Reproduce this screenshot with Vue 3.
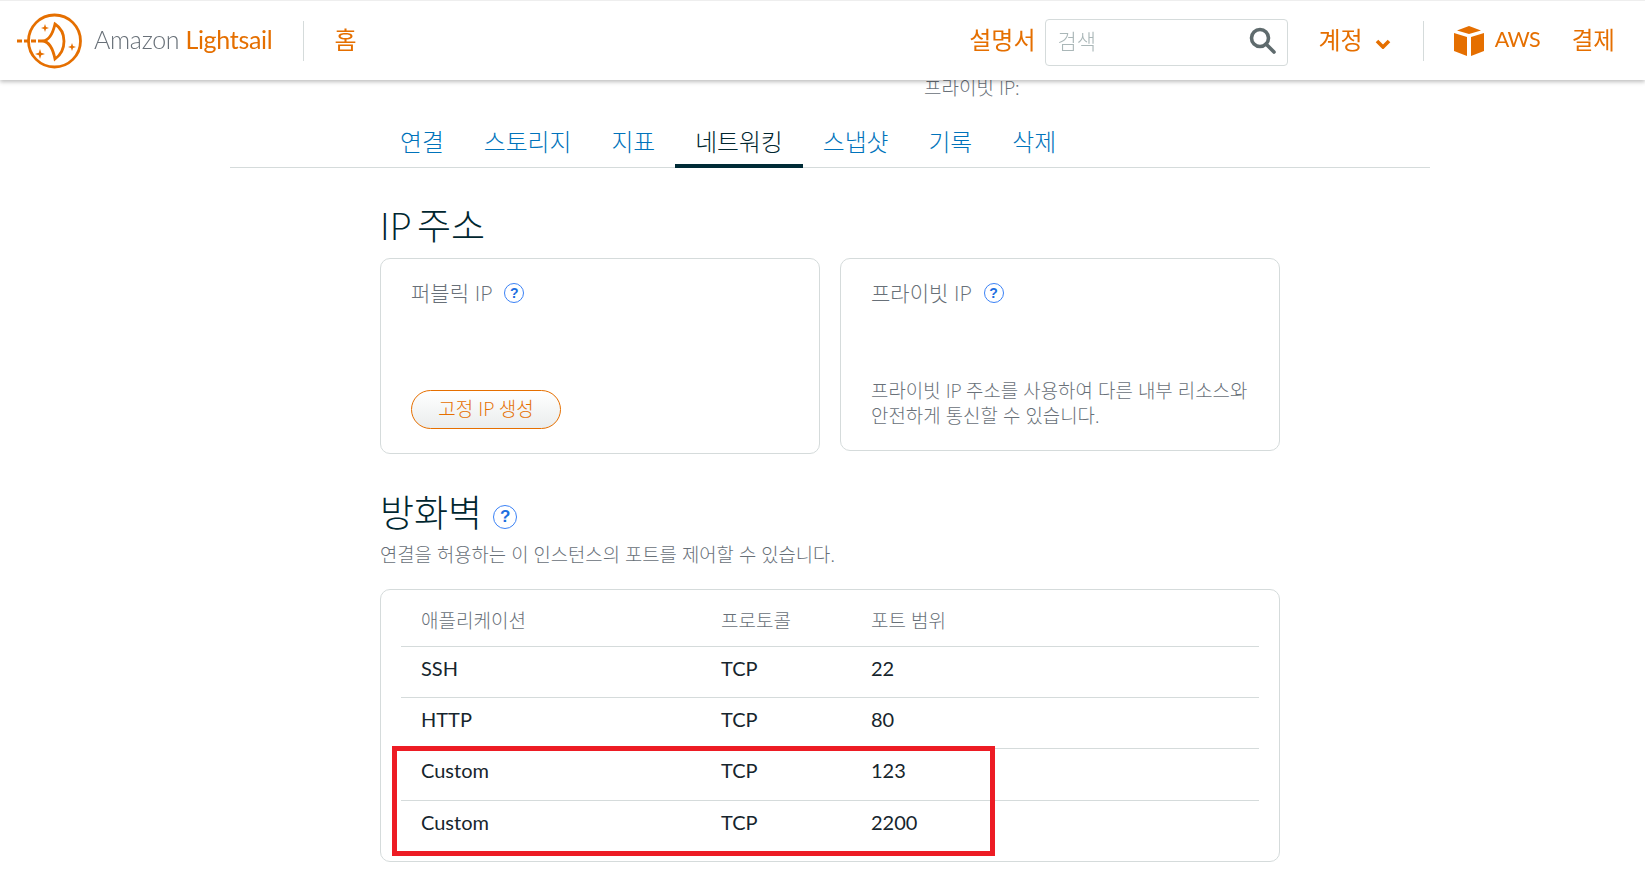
<script setup>
const tabs = ['연결', '스토리지', '지표', '네트워킹', '스냅샷', '기록', '삭제']
const rows = [
  { app: 'SSH', proto: 'TCP', port: '22' },
  { app: 'HTTP', proto: 'TCP', port: '80' },
  { app: 'Custom', proto: 'TCP', port: '123' },
  { app: 'Custom', proto: 'TCP', port: '2200' }
]
</script>

<template>
  <div class="page">
    <header class="topbar">
      <div class="brand">
        <svg class="logo" viewBox="0 0 66 60" width="66" height="60" fill="none" stroke="#e56f00" stroke-width="2.8">
          <circle cx="38.5" cy="30" r="26" />
          <path d="M1 30H27" stroke-dasharray="5 2" />
          <path d="M27 30C34 29 37 22 39 13C51 21 51 39 39 48C37 38 34 31 27 30Z" />
          <path d="M29 13l1 3 3 1-3 1-1 3-1-3-3-1 3-1zM24 38l1.2 3.8 3.8 1.2-3.8 1.2-1.2 3.8-1.2-3.8-3.8-1.2 3.8-1.2zM56 32l1 3 3 1-3 1-1 3-1-3-3-1 3-1z" fill="#e56f00" stroke="none" />
        </svg>
        <span class="wordmark"><span class="am">Amazon</span> <span class="ls">Lightsail</span></span>
      </div>
      <div class="vr first"></div>
      <a class="nav home">홈</a>
      <div class="spacer"></div>
      <a class="nav docs">설명서</a>
      <div class="search">
        <span class="ph">검색</span>
        <svg viewBox="0 0 28 28" width="28" height="28" fill="none" stroke="#5f6b6d" stroke-width="3.6">
          <circle cx="12" cy="12" r="8.5" />
          <path d="M18 18l8 8" stroke-linecap="round" />
        </svg>
      </div>
      <a class="nav account">계정
        <svg viewBox="0 0 16 10" width="16" height="10" fill="none" stroke="#e56f00" stroke-width="3.6"><path d="M2 2l6 6 6-6" /></svg>
      </a>
      <div class="vr second"></div>
      <svg class="cube" viewBox="0 0 32 32" width="32" height="32" fill="#e56f00">
        <path d="M16 1l12 4.5L16 9 4 5.5z" />
        <path d="M1 8l13 4v19L1 26z" />
        <path d="M31 8l-13 4v19l13-5z" />
      </svg>
      <a class="nav aws">AWS</a>
      <a class="nav bill">결제</a>
    </header>

    <main class="main">
      <p class="peek">프라이빗 IP:</p>
      <nav class="tabs">
        <a v-for="t in tabs" :key="t" class="tab" :class="{ active: t === '네트워킹' }">{{ t }}</a>
      </nav>

      <section class="content">
        <h2 class="title">IP 주소</h2>
        <div class="cards">
          <div class="card public">
            <div class="label">퍼블릭 IP <span class="help">?</span></div>
            <button class="btn">고정 IP 생성</button>
          </div>
          <div class="card private">
            <div class="label">프라이빗 IP <span class="help">?</span></div>
            <p class="desc">프라이빗 IP 주소를 사용하여 다른 내부 리소스와<br />안전하게 통신할 수 있습니다.</p>
          </div>
        </div>

        <h2 class="title fw">방화벽 <span class="help big">?</span></h2>
        <p class="sub">연결을 허용하는 이 인스턴스의 포트를 제어할 수 있습니다.</p>

        <div class="tablecard">
          <div class="row head">
            <span>애플리케이션</span><span>프로토콜</span><span>포트 범위</span>
          </div>
          <div v-for="(r, i) in rows" :key="i" class="row" :class="{ last: i === rows.length - 1 }">
            <span>{{ r.app }}</span><span>{{ r.proto }}</span><span>{{ r.port }}</span>
          </div>
          <div class="mark"></div>
        </div>
      </section>
    </main>
  </div>
</template>

<style>
html, body { margin: 0; background: #fff; overflow: hidden; }
</style>

<style scoped>
.page {
  height: 870px;
  overflow: hidden;
  font-family: "Lato", "Noto Sans CJK KR", sans-serif;
  font-weight: 400;
  color: #687078;
}
.topbar {
  position: fixed;
  top: 0; left: 0; right: 0;
  height: 80px;
  box-sizing: border-box;
  border-top: 1px solid #eee;
  background: #fff;
  box-shadow: 0 2px 4px rgba(0,0,0,.25);
  display: flex;
  align-items: center;
  z-index: 5;
}
.brand { display: flex; align-items: center; margin-left: 16px; }
.wordmark { font-size: 25px; margin-left: 12px; padding-bottom: 4px; white-space: nowrap; letter-spacing: -.3px; }
.am { color: #687078; font-weight: 300; }
.ls { color: #e56f00; font-weight: 400; }
.vr { width: 1px; height: 40px; background: #d5dbdb; }
.vr.first { margin-left: 31px; }
.nav { color: #e56f00; font-size: 24px; white-space: nowrap; padding-bottom: 4px; }
.home { margin-left: 30px; }
.spacer { flex: 1; }
.search {
  width: 243px; height: 47px; box-sizing: border-box;
  margin: 4px 0 0 9px;
  border: 1px solid #d5dbdb; border-radius: 4px;
  display: flex; align-items: center; justify-content: space-between;
  padding: 0 11px 6px 12px;
}
.ph { font-size: 21px; color: #aab7b8; font-weight: 300; }
.account { margin-left: 31px; display: flex; align-items: center; gap: 12px; }
.account svg { margin-top: 11px; }
.vr.second { margin-left: 32px; }
.cube { margin-left: 29px; }
.aws { margin-left: 10px; font-size: 21.5px; font-weight: 400; letter-spacing: -.8px; }
.bill { margin-left: 32px; margin-right: 30px; font-size: 23.5px; }

.main { width: 1200px; margin-left: 230px; padding-top: 77px; }
.peek { margin: 1px 0 -1px 694px; font-size: 19px; line-height: 20px; height: 20px; font-weight: 300; }
.tabs {
  height: 71px; box-sizing: border-box;
  border-bottom: 1px solid #d5dbdb;
  display: flex; padding-left: 150px;
}
.tab {
  color: #0073bb;
  font-size: 23.8px;
  font-weight: 300;
  padding: 16px 20px 0;
  height: 71px; box-sizing: border-box;
  display: flex; align-items: center;
}
.tab.active { color: #00262f; box-shadow: inset 0 -4px 0 #002b36; }

.content { padding: 0 150px; }
.title {
  margin: 33px 0 0;
  font-size: 37px; line-height: 50px; font-weight: 300; color: #00262f;
  word-spacing: -3px;
}
.cards { display: flex; gap: 20px; align-items: flex-start; margin-top: 7px; }
.card {
  width: 440px; box-sizing: border-box;
  border: 1px solid #d5dbdb; border-radius: 10px;
  padding: 20px 30px;
}
.card.public { height: 196px; }
.card.private { height: 193px; display: flex; flex-direction: column; justify-content: space-between; padding-bottom: 22px; }
.label { font-size: 21px; line-height: 28px; display: flex; align-items: center; gap: 12px; font-weight: 300; }
.help {
  display: inline-flex; align-items: center; justify-content: center;
  width: 18px; height: 18px; border-radius: 50%;
  border: 1.5px solid #3b82f6; color: #1d6fe0;
  font-size: 14px; font-weight: 700;
  font-family: "Liberation Sans", sans-serif;
}
.btn {
  display: block; margin-top: 83px;
  width: 150px; height: 39px; box-sizing: border-box;
  border: 1.5px solid #e56f00; border-radius: 20px;
  padding: 0 0 5px;
  background: linear-gradient(#fff, #eaeded);
  color: #e56f00; font: inherit; font-weight: 300; font-size: 19px;
}
.desc { margin: 0; font-size: 18.9px; line-height: 25px; white-space: nowrap; font-weight: 300; }
.title.fw { margin-top: 34px; display: flex; align-items: center; gap: 11px; }
.help.big { width: 22px; height: 22px; font-size: 17px; margin-top: 7px; }
.sub { margin: 4px 0 0; font-size: 18.8px; line-height: 26px; font-weight: 300; }
.tablecard {
  position: relative;
  margin-top: 21px;
  height: 273px; box-sizing: border-box;
  border: 1px solid #d5dbdb; border-radius: 10px;
  padding: 5.8px 20px 0;
}
.row {
  display: grid; grid-template-columns: 300px 150px 1fr;
  padding: 0 0 9px 20px;
  height: 51.2px; box-sizing: border-box;
  align-items: center;
  border-bottom: 1px solid #d5dbdb;
  font-size: 20px; font-weight: 400; color: #16252d;
}
.row.last { border-bottom: 0; }
.row.head { font-size: 19px; font-weight: 300; color: #687078; padding-bottom: 3.6px; }
.mark {
  position: absolute;
  left: 11px; top: 156px;
  width: 603px; height: 110px;
  box-sizing: border-box;
  border: 5px solid #ed1c24;
}
</style>
